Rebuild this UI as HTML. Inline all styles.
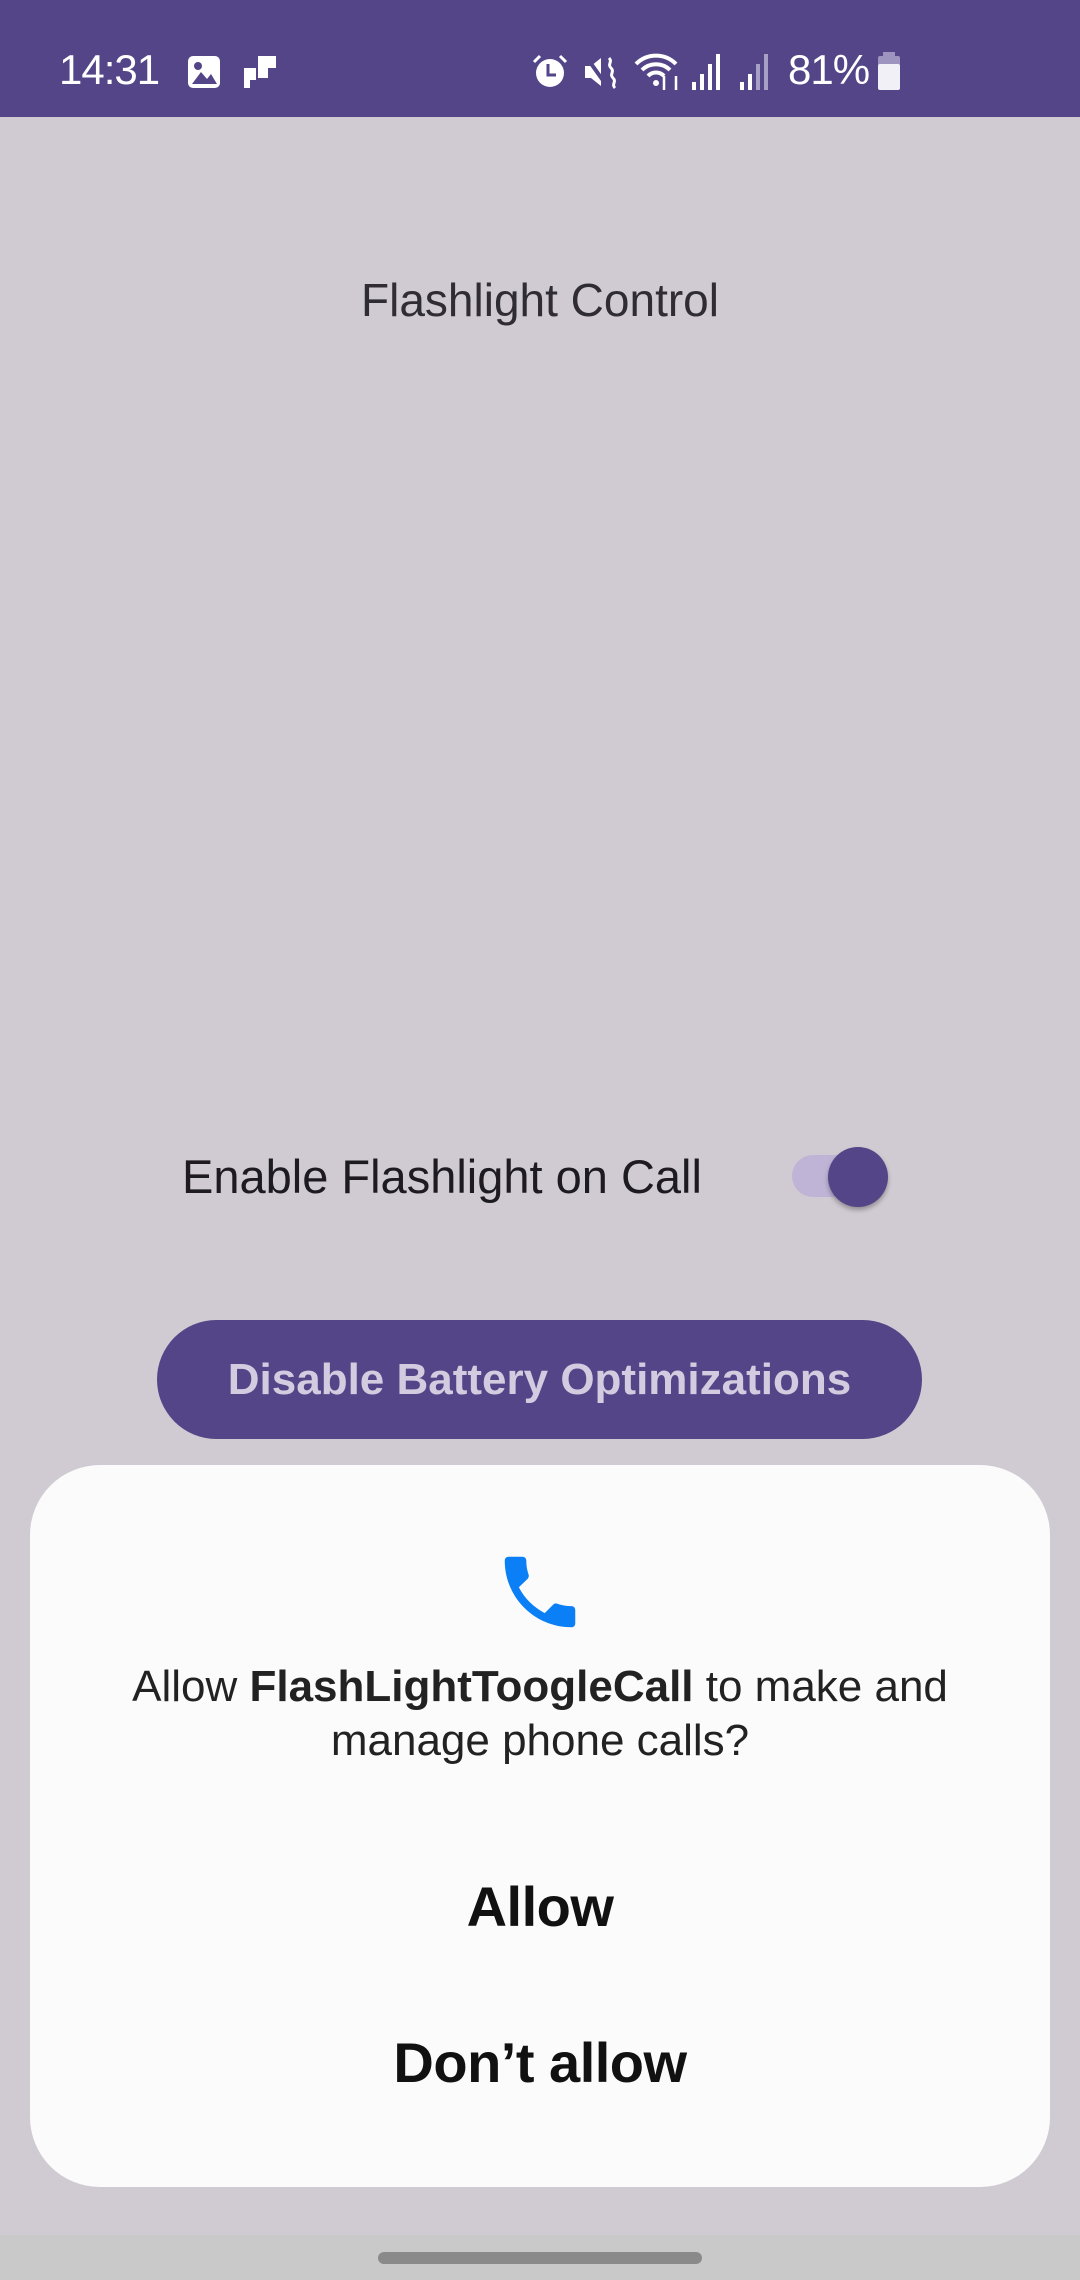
<!DOCTYPE html>
<html><head><meta charset="utf-8">
<style>
*{margin:0;padding:0;box-sizing:border-box}
body{width:1080px;height:2280px;background:#d0cbd2;font-family:"Liberation Sans",sans-serif;position:relative;overflow:hidden}
.sb{position:absolute;left:0;top:0;width:1080px;height:117px;background:#534587;color:#fff}
.abs{position:absolute}
.t{position:absolute;left:0;width:1080px;text-align:center}
</style></head><body>
<div class="sb">
 <div class="abs" style="left:59px;top:46px;font-size:42px;letter-spacing:-1px">14:31</div>
 <svg class="abs" style="left:186px;top:54px" width="36" height="36" viewBox="0 0 36 36"><rect x="2" y="2" width="32" height="32" rx="5" fill="#fff"/><circle cx="12" cy="12" r="4" fill="#534587"/><path d="M6 30 L15 18 L21 25 L25 20 L31 30Z" fill="#534587"/></svg>
 <svg class="abs" style="left:242px;top:54px" width="36" height="36" viewBox="0 0 36 36"><path d="M2 14h12v12h-6v8H2z M16 2h18v12h-8v10h-10z" fill="#fff"/></svg>
 <svg class="abs" style="left:532px;top:54px" width="36" height="36" viewBox="0 0 36 36"><circle cx="18" cy="19" r="14" fill="#fff"/><path d="M16 10v11h8" stroke="#534587" stroke-width="3" fill="none"/><path d="M2 8l6-6M34 8l-6-6" stroke="#fff" stroke-width="3"/></svg>
 <svg class="abs" style="left:583px;top:54px" width="36" height="36" viewBox="0 0 36 36"><path d="M2 12h6l10-8v28l-10-8H2z" fill="#fff"/><path d="M4 4l20 28" stroke="#534587" stroke-width="4"/><path d="M26 4c4 4-2 6 2 10s-2 6 2 10-2 6 2 10" stroke="#fff" stroke-width="3" fill="none"/></svg>
 <svg class="abs" style="left:634px;top:52px" width="48" height="40" viewBox="0 0 48 40"><path d="M2 12a28 28 0 0 1 40 0M8 18a20 20 0 0 1 28 0M14 24a11 11 0 0 1 16 0" stroke="#fff" stroke-width="4" fill="none"/><circle cx="22" cy="31" r="3" fill="#fff"/><path d="M30 24v14M42 24v14" stroke="#fff" stroke-width="2.5"/></svg>
 <svg class="abs" style="left:690px;top:52px" width="36" height="40" viewBox="0 0 36 40"><rect x="2" y="30" width="4" height="8" fill="#fff"/><rect x="10" y="22" width="4" height="16" fill="#fff"/><rect x="18" y="12" width="4" height="26" fill="#fff"/><rect x="26" y="2" width="4" height="36" fill="#fff"/></svg>
 <svg class="abs" style="left:738px;top:52px" width="36" height="40" viewBox="0 0 36 40"><rect x="2" y="30" width="4" height="8" fill="#fff"/><rect x="10" y="22" width="4" height="16" fill="#fff"/><rect x="18" y="12" width="4" height="26" fill="#a79fc6"/><rect x="26" y="2" width="4" height="36" fill="#a79fc6"/></svg>
 <div class="abs" style="left:788px;top:46px;font-size:42px;letter-spacing:-1px">81%</div>
 <svg class="abs" style="left:876px;top:52px" width="26" height="38" viewBox="0 0 26 38"><rect x="7" y="0" width="12" height="6" fill="#9d94c0"/><rect x="2" y="4" width="22" height="10" rx="2" fill="#9d94c0"/><rect x="2" y="12" width="22" height="26" rx="2" fill="#f2f0f7"/></svg>
</div>

<div class="t" style="top:273px;font-size:46px;color:#2f2d33">Flashlight Control</div>

<div class="abs" style="left:182px;top:1149px;font-size:47px;color:#1d1b20">Enable Flashlight on Call</div>
<div class="abs" style="left:792px;top:1155px;width:82px;height:42px;border-radius:21px;background:#bfb4d6"></div>
<div class="abs" style="left:828px;top:1147px;width:60px;height:60px;border-radius:50%;background:#534587;box-shadow:0 3px 5px rgba(0,0,0,0.3)"></div>

<div class="abs" style="left:157px;top:1320px;width:765px;height:119px;border-radius:60px;background:#534587;color:#d3cbdf;font-size:44px;font-weight:bold;text-align:center;line-height:119px">Disable Battery Optimizations</div>

<div class="abs" style="left:0;top:2235px;width:1080px;height:45px;background:#c9c9c9"></div>
<div class="abs" style="left:378px;top:2252px;width:324px;height:12px;border-radius:6px;background:#8a8a8a"></div>

<div class="abs" style="left:30px;top:1465px;width:1020px;height:722px;border-radius:70px;background:#fbfbfb"></div>
<svg class="abs" style="left:493px;top:1545px" width="94" height="94" viewBox="0 0 24 24"><path fill="#0b7ff5" d="M6.6 10.8c1.4 2.8 3.8 5.1 6.6 6.6l2.2-2.2c.3-.3.7-.4 1-.2 1.1.4 2.300.6 3.6.6.6 0 1 .4 1 1V20c0 .6-.4 1-1 1C10.6 21 3 13.4 3 4c0-.6.4-1 1-1h3.5c.6 0 1 .4 1 1 0 1.3.2 2.5.6 3.6.1.3 0 .7-.2 1z"/></svg>
<div class="t" style="top:1660px;font-size:44px;line-height:54px;color:#222">Allow <b>FlashLightToogleCall</b> to make and<br>manage phone calls?</div>
<div class="t" style="top:1874px;font-size:56px;font-weight:bold;color:#111;letter-spacing:-0.5px">Allow</div>
<div class="t" style="top:2030px;font-size:56px;font-weight:bold;color:#111;letter-spacing:-0.5px">Don’t allow</div>
</body></html>
